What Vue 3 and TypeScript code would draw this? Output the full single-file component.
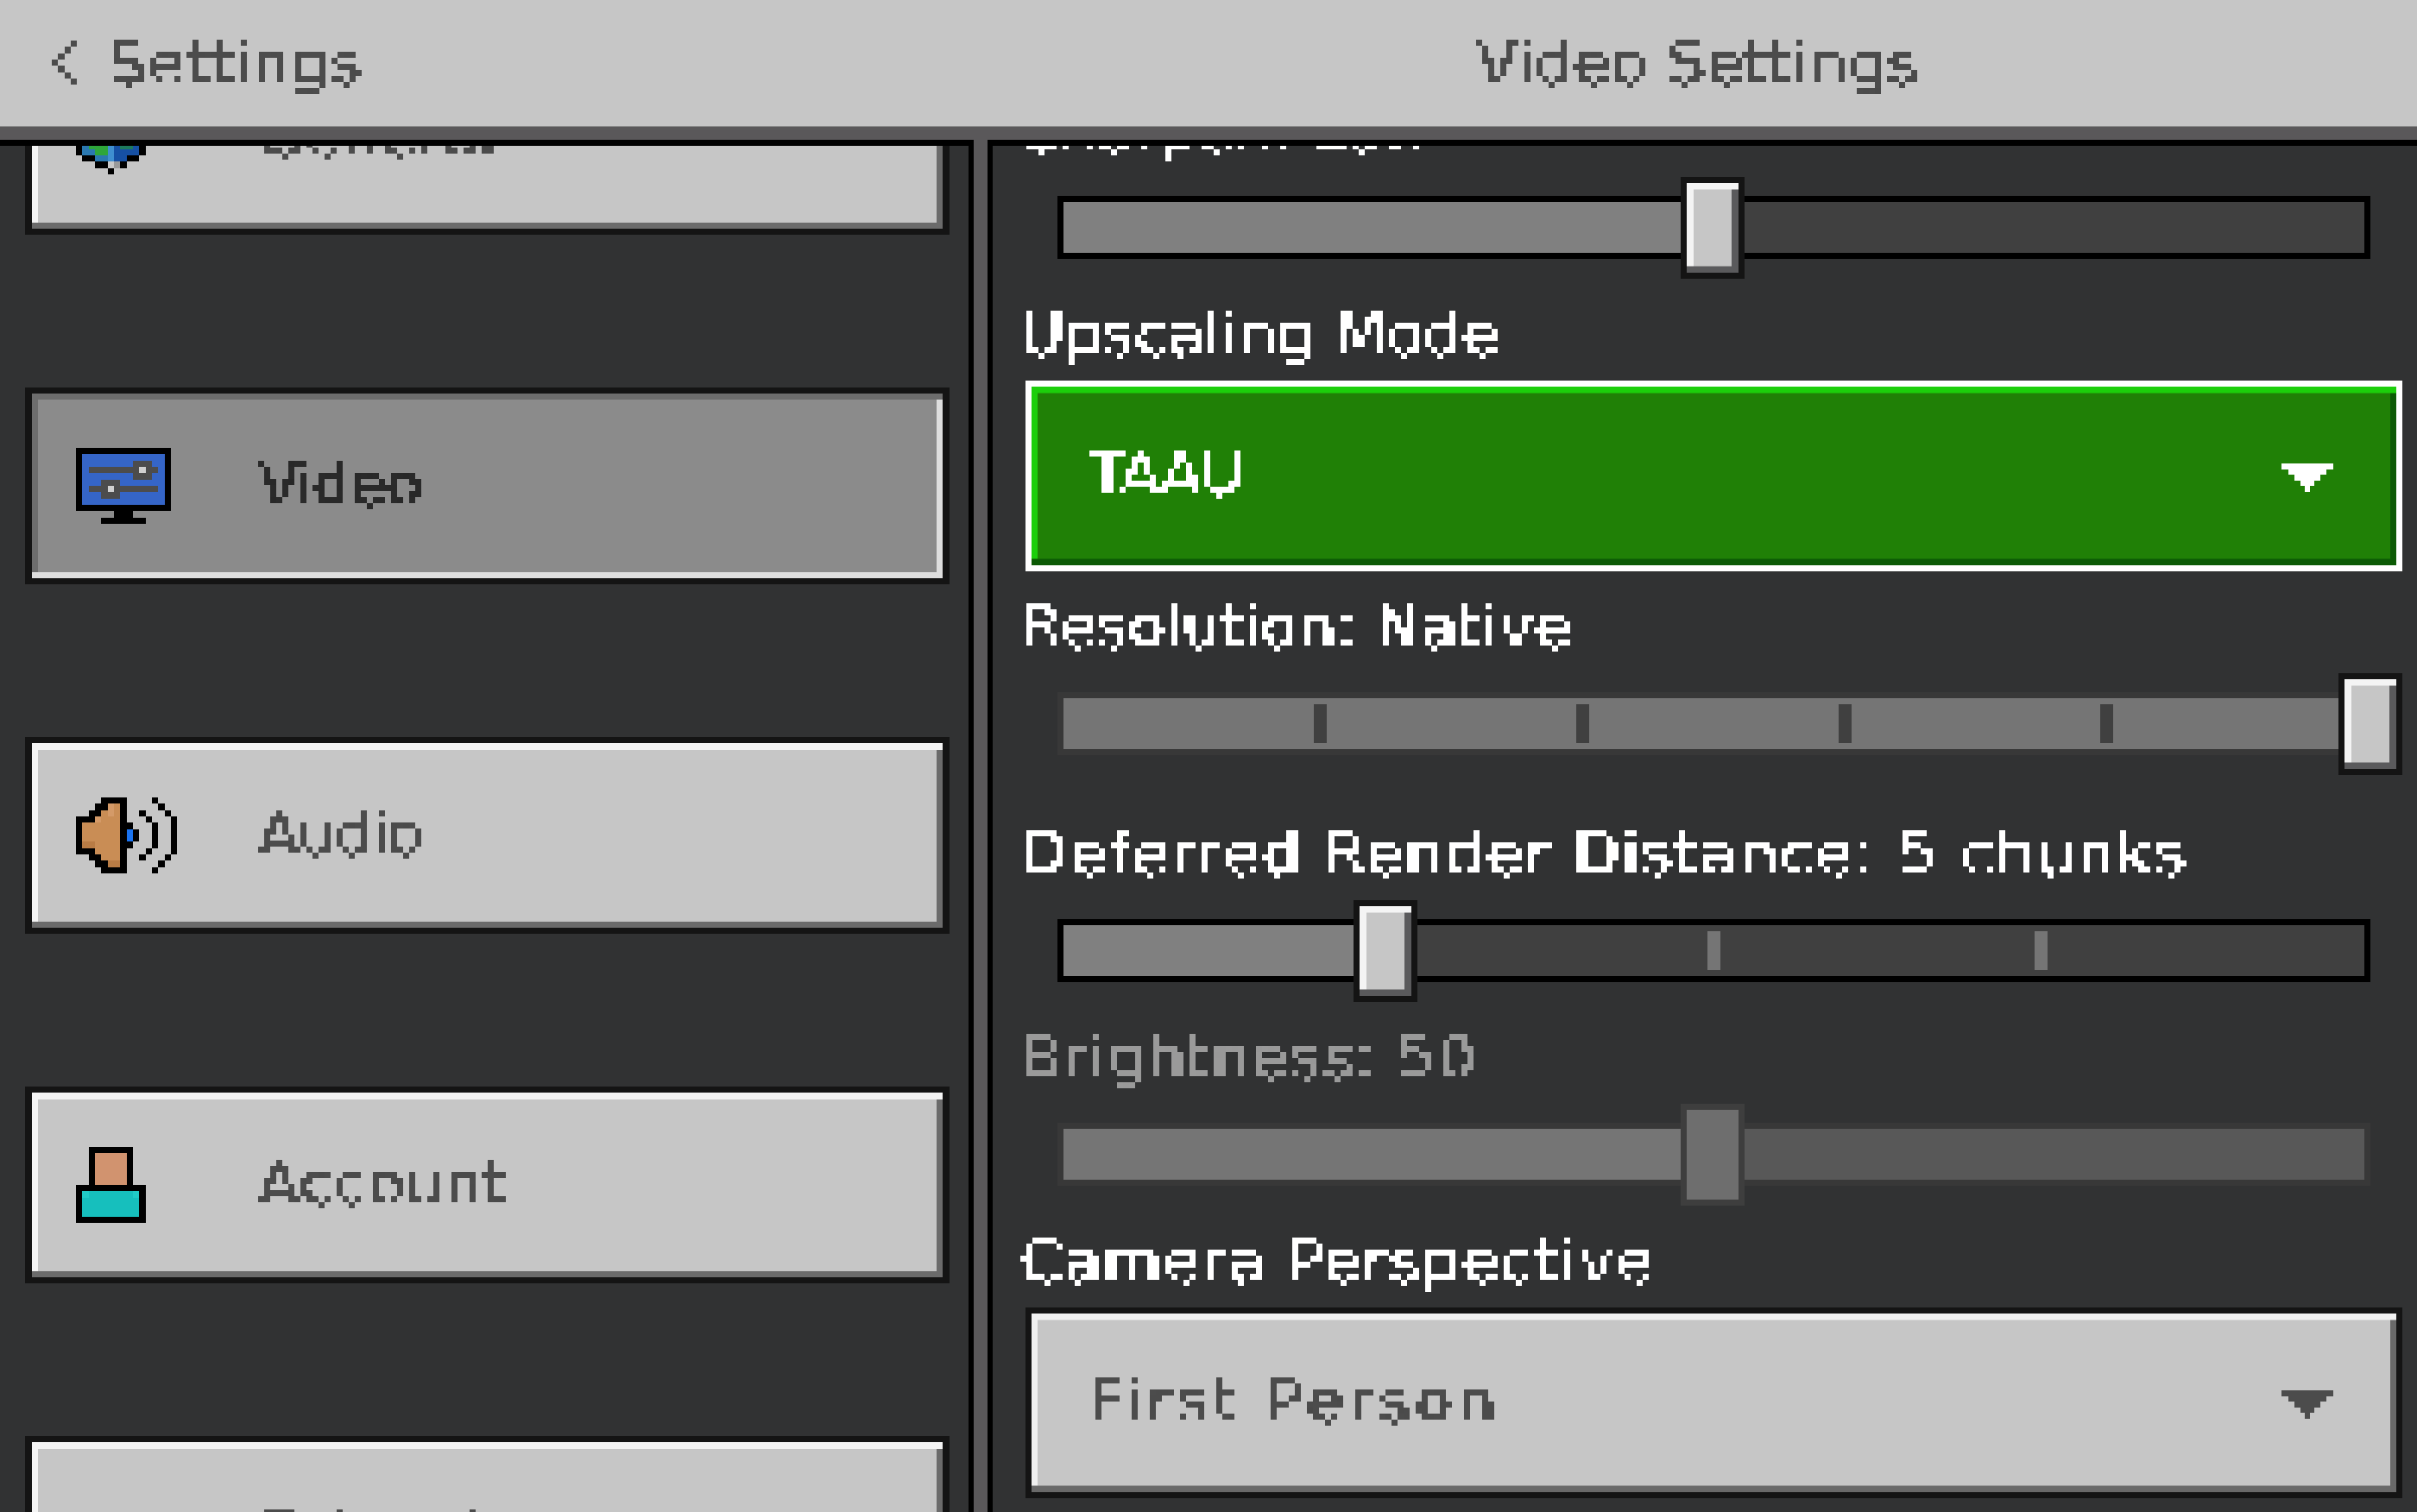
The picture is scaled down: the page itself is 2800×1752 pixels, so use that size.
<script setup lang="ts">
type Palette = Record<string, string>
interface PixelIcon {
  cols: number
  rows: number
  cells: { x: number; y: number; fill: string }[]
}

const PX = 7.33

const toIcon = (map: string[], palette: Palette): PixelIcon => {
  const cells: PixelIcon['cells'] = []
  map.forEach((row, y) => {
    row.split('').forEach((ch, x) => {
      if (palette[ch]) cells.push({ x, y, fill: palette[ch] })
    })
  })
  return { cols: map[0].length, rows: map.length, cells }
}

const globe = toIcon(
  [
    '.....k.....',
    '...kkkkk...',
    '..kbbLbbk..',
    '.kbggLbbbk.',
    '.kbggLbdbk.',
    'kbbbgLbddbk',
    'kllggLbbdbk',
    'klgggLbddbk',
    'kllggLbbbbk',
    '.kkllLbbkk.',
    '...kkWGk...',
    '.....k.....'
  ],
  { k: '#000', b: '#1650a4', L: '#3f8fd0', g: '#2ea63a', d: '#1d7a5c', l: '#2a78b0', W: '#c8c8c8', G: '#9a9a9a' }
)

const monitor = toIcon(
  [
    'kkkkkkkkkkkkkkk',
    'kbbbbbbbbbbbbbk',
    'kbbbbbbbbgggbbk',
    'kbggggggggwggbk',
    'kbbbbbbbbgggbbk',
    'kbbbgggbbbbbbbk',
    'kbgggwgggggggbk',
    'kbbbgggbbbbbbbk',
    'kbbbbbbbbbbbbbk',
    'kkkkkkkkkkkkkkk',
    '......kkk......',
    '....kkkkkkk....'
  ],
  { k: '#000', b: '#3565c7', g: '#4c4c4c', w: '#d0d0d0' }
)

const speaker = toIcon(
  [
    '....kkkk....k...',
    '...kkLok.....k..',
    '..kkoLok..k...k.',
    'kkkLoook...k...k',
    'kooooookk...k..k',
    'kooooookbk..k..k',
    'kooooookbk..k..k',
    'kDDooookk...k..k',
    'kkkooook...k...k',
    '..kkoook..k...k.',
    '...kkDDk.....k..',
    '....kkkk....k...'
  ],
  { k: '#000', o: '#c98d55', L: '#d49a68', D: '#b97c45', b: '#1a73f0' }
)

const person = toIcon(
  [
    '..kkkkkkk..',
    '..ksssssk..',
    '..ksssssk..',
    '..ksssssk..',
    '..ksssssk..',
    '..ksssssk..',
    'kkkkkkkkkkk',
    'kTtttttttTk',
    'ktttttttttk',
    'ktttttttttk',
    'ktttttttttk',
    'kkkkkkkkkkk'
  ],
  { k: '#000', s: '#d1936f', t: '#16bfbd', T: '#20cbc6' }
)

const chest = toIcon(
  [
    '...k.......k...',
    'kkkWkkkkkkkWkkk',
    'koobooooooobook',
    'koobooooooobook',
    'koooooooooooook',
    'koooooooooooook'
  ],
  { k: '#000', W: '#b4b4b4', o: '#e49d6d', b: '#b06a3a' }
)

const backArrow = toIcon(
  ['...k', '..k.', '.k..', 'k...', '.k..', '..k.', '...k'],
  { k: '#4c4c4c' }
)

const tabs = [
  { name: 'General', icon: globe, active: false, track: 0 },
  { name: 'Video', icon: monitor, active: true, track: -1.5 },
  { name: 'Audio', icon: speaker, active: false, track: -2 },
  { name: 'Account', icon: person, active: false, track: 1 },
  { name: 'Extensions', icon: chest, active: false, track: 0 }
]

interface SliderRow {
  kind: 'slider'
  label: string
  track: number
  value: number
  ticks: number[]
  quiet?: boolean
  dim?: boolean
  spaced?: boolean
}
interface SelectRow {
  kind: 'select'
  label: string
  track: number
  value: string
  valueTrack: number
  focused?: boolean
}

const rows: (SliderRow | SelectRow)[] = [
  { kind: 'slider', label: 'Sharpen: Low', track: 0, value: 0.499, ticks: [] },
  { kind: 'select', label: 'Upscaling Mode', track: 0, value: 'TAAU', valueTrack: -2.5, focused: true },
  { kind: 'slider', label: 'Resolution: Native', track: 0, value: 1, ticks: [0.2, 0.4, 0.6, 0.8], quiet: true, spaced: true },
  { kind: 'slider', label: 'Deferred Render Distance: 5 chunks', track: 2.5, value: 0.25, ticks: [0.25, 0.5, 0.75] },
  { kind: 'slider', label: 'Brightness: 50', track: 1.5, value: 0.499, ticks: [], quiet: true, dim: true },
  { kind: 'select', label: 'Camera Perspective', track: 1.8, value: 'First Person', valueTrack: 6 }
]

const arrowRows = [60, 44, 30, 16, 6]
const thumbLeft = (v: number) => `calc((100% - 74px) * ${v})`
const tickLeft = (t: number) => `calc(${t * 100}% + ${11.5 * t - 6.5}px)`
</script>

<template>
  <div class="page">
    <svg class="defs" width="0" height="0" aria-hidden="true">
      <filter id="blocky" x="0" y="0" width="100%" height="100%" color-interpolation-filters="sRGB">
        <feFlood x="3" y="3" width="1" height="1" flood-color="#000" />
        <feComposite width="7" height="7" />
        <feTile result="grid" />
        <feComponentTransfer in="SourceGraphic" result="hard">
          <feFuncA type="discrete" tableValues="0 1 1 1" />
        </feComponentTransfer>
        <feComposite in="hard" in2="grid" operator="in" />
        <feMorphology operator="dilate" radius="3" />
      </filter>
    </svg>

    <header class="topbar">
      <div class="back">
        <svg class="pixels" :width="backArrow.cols * PX" :height="backArrow.rows * PX" :viewBox="`0 0 ${backArrow.cols} ${backArrow.rows}`">
          <rect v-for="(c, i) in backArrow.cells" :key="i" :x="c.x" :y="c.y" width="1" height="1" :fill="c.fill" />
        </svg>
        <span class="txt back-label">Settings</span>
      </div>
      <div class="title"><span class="txt">Video Settings</span></div>
    </header>
    <div class="strip"></div>

    <main class="panes">
      <nav class="sidebar">
        <div class="tab-list">
          <div v-for="tab in tabs" :key="tab.name" class="tab" :class="{ active: tab.active }">
            <div class="tab-face">
              <div class="tab-icon">
                <svg class="pixels" :width="tab.icon.cols * PX" :height="tab.icon.rows * PX" :viewBox="`0 0 ${tab.icon.cols} ${tab.icon.rows}`">
                  <rect v-for="(c, i) in tab.icon.cells" :key="i" :x="c.x" :y="c.y" width="1" height="1" :fill="c.fill" />
                </svg>
              </div>
              <span class="txt tab-label" :style="{ letterSpacing: tab.track + 'px' }">{{ tab.name }}</span>
            </div>
          </div>
        </div>
      </nav>

      <div class="divider"></div>

      <section class="content">
        <div class="settings">
          <div v-for="row in rows" :key="row.label" class="setting" :class="{ spaced: row.kind === 'slider' && row.spaced }">
            <div class="txt setting-label" :class="{ dim: row.kind === 'slider' && row.dim }" :style="{ letterSpacing: row.track + 'px' }">{{ row.label }}</div>

            <div v-if="row.kind === 'slider'" class="slider" :class="{ quiet: row.quiet, dim: row.dim }">
              <div class="track">
                <div class="rail">
                  <div class="rail-fill" :style="{ width: row.value * 100 + '%' }"></div>
                  <i
                    v-for="t in row.ticks"
                    :key="t"
                    class="tick"
                    :class="{ passed: t < row.value }"
                    :style="{ left: tickLeft(t) }"
                  ></i>
                </div>
              </div>
              <div class="thumb" :style="{ left: thumbLeft(row.value) }"><div class="thumb-face"></div></div>
            </div>

            <div v-else class="select" :class="{ focused: row.focused }">
              <div class="select-face">
                <span class="txt select-value" :style="{ letterSpacing: row.valueTrack + 'px' }">{{ row.value }}</span>
                <div class="arrow">
                  <i v-for="w in arrowRows" :key="w" :style="{ width: w + 'px' }"></i>
                </div>
              </div>
            </div>
          </div>
        </div>
      </section>
    </main>
  </div>
</template>

<style>
html,
body {
  margin: 0;
  background: #313233;
}
</style>

<style scoped>
.page {
  width: 2800px;
  height: 1752px;
  display: flex;
  flex-direction: column;
  overflow: hidden;
  background: #313233;
  font-family: "DejaVu Sans", sans-serif;
  font-size: 70px;
}

.defs {
  position: absolute;
}

.txt {
  filter: url(#blocky);
  -webkit-text-stroke: 0.8px currentColor;
}

.pixels {
  display: block;
  shape-rendering: crispEdges;
}

.topbar {
  flex: none;
  height: 146px;
  display: flex;
  align-items: center;
  background: #c6c6c6;
  color: #4c4c4c;
  border-bottom: 1px solid #8b8b8b;
}

.back {
  width: 1150px;
  padding-left: 60px;
  box-sizing: border-box;
  display: flex;
  align-items: center;
  gap: 36px;
}

.back-label {
  letter-spacing: 1px;
}

.title {
  flex: 1;
  padding-right: 17px;
  text-align: center;
  letter-spacing: 0.5px;
}

.title .txt {
  display: inline-block;
}

.strip {
  flex: none;
  height: 15px;
  background: #5a585a;
}

.panes {
  flex: 1;
  min-height: 0;
  display: flex;
}

.sidebar {
  width: 1128px;
  box-sizing: border-box;
  border-top: 7px solid #000;
  border-right: 6px solid #000;
  overflow: hidden;
}

.tab-list {
  margin-top: -125px;
  padding-left: 29px;
  display: flex;
  flex-direction: column;
  gap: 177px;
}

.tab {
  width: 1071px;
  height: 228px;
  flex: none;
  box-sizing: border-box;
  border: 8px solid #141414;
  border-width: 7px 8px;
}

.tab-face {
  height: 100%;
  box-sizing: border-box;
  padding-left: 51px;
  display: flex;
  align-items: center;
  background: #c6c6c6;
  color: #4c4c4c;
  box-shadow: inset 0 8px #f4f4f4, inset 0 -7px #6b6b6b, inset 7px 0 #f4f4f4, inset -7px 0 #6b6b6b;
}

.tab.active .tab-face {
  background: #8b8b8b;
  color: #2a2a2a;
  box-shadow: inset 0 7px #6d6d6d, inset 0 -7px #dedede, inset 7px 0 #6d6d6d, inset -7px 0 #dedede;
}

.tab-icon {
  width: 211px;
  flex: none;
}

.tab-label {
  margin-bottom: 5px;
}

.divider {
  width: 16px;
  flex: none;
  background: #5a585a;
}

.content {
  flex: 1;
  min-width: 0;
  box-sizing: border-box;
  border-top: 7px solid #000;
  border-left: 6px solid #000;
  overflow: hidden;
}

.settings {
  margin-top: -45px;
  padding: 0 17px 0 38px;
  display: flex;
  flex-direction: column;
  gap: 37.5px;
}

.setting.spaced {
  margin-bottom: 27px;
}

.setting-label {
  height: 80.5px;
  margin-left: -6px;
  line-height: 54px;
  color: #fff;
  white-space: nowrap;
}

.setting-label.dim {
  color: #9a9a9a;
}

.slider {
  position: relative;
  height: 118px;
  display: flex;
  align-items: center;
}

.track {
  width: 100%;
  padding: 0 37px;
  box-sizing: border-box;
}

.rail {
  position: relative;
  height: 59px;
  background: #404040;
  border: 7.5px solid #000;
}

.rail-fill {
  height: 100%;
  background: #808080;
}

.tick {
  position: absolute;
  top: 7px;
  width: 15px;
  height: 45px;
  margin-left: -7px;
  background: #757575;
}

.tick.passed {
  background: #404040;
}

.slider.quiet .rail {
  border-color: #383838;
  background: #585858;
}

.slider.quiet .rail-fill {
  background: #757575;
}

.thumb {
  position: absolute;
  top: 0;
  width: 74px;
  height: 118px;
  box-sizing: border-box;
  border: 7.5px solid #141414;
}

.thumb-face {
  height: 100%;
  background: #c6c6c6;
  box-shadow: inset 0 7.5px #f4f4f4, inset 0 -7.5px #5a5a5c, inset 8px 0 #f4f4f4, inset -8px 0 #5a5a5c;
}

.slider.dim .thumb {
  border-color: #3e3e3e;
}

.slider.dim .thumb-face {
  background: #6e6e6e;
  box-shadow: none;
}

.select {
  height: 221px;
  box-sizing: border-box;
  border: 7.5px solid #141414;
}

.select-face {
  height: 100%;
  box-sizing: border-box;
  padding: 0 73px;
  display: flex;
  align-items: center;
  justify-content: space-between;
  background: #c6c6c6;
  color: #4c4c4c;
  box-shadow: inset 0 7.5px #f0f0f0, inset 0 -7.5px #696969, inset 7px 0 #f0f0f0, inset -7px 0 #696969;
}

.select-value {
  margin-bottom: 5px;
  margin-left: -6px;
}

.arrow {
  width: 60px;
  margin-top: 5px;
  display: flex;
  flex-direction: column;
  align-items: center;
}

.arrow i {
  display: block;
  height: 6.5px;
  background: currentColor;
}

.select.focused {
  border-color: #fff;
}

.select.focused .select-face {
  background: #208006;
  color: #fff;
  box-shadow: inset 0 7.5px #1ccf0b, inset 0 -7.5px #0c5a05, inset 7px 0 #1ccf0b, inset -7px 0 #0c5a05;
}
</style>
